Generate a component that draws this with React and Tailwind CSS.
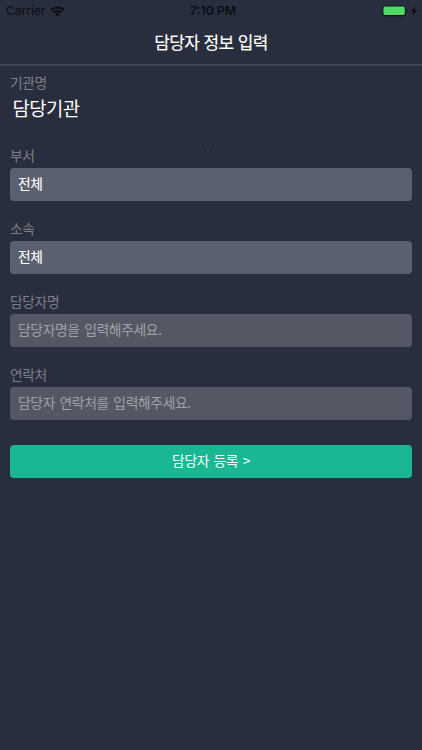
import { useState } from 'react';

function StatusBar() {
  return (
    <div className="flex h-[22px] items-center pr-1 pl-1.5 font-['Inter','Liberation_Sans',sans-serif] leading-none text-[#0b0d13]">
      <div className="flex flex-1 items-center gap-[5px]">
        <span className="text-[12px]">Carrier</span>
        <svg width="15" height="11" viewBox="0 0 14 11" fill="none" stroke="currentColor" strokeWidth="2.1">
          <path d="M.7 4.1a9 9 0 0 1 12.6 0" />
          <path d="M3 6.6a5.7 5.7 0 0 1 8 0" />
          <path d="M7 10.6 4.7 8.3a3.2 3.2 0 0 1 4.6 0z" fill="currentColor" stroke="none" />
        </svg>
      </div>
      <span className="pl-[2px] text-[12.3px] font-semibold">7:10 PM</span>
      <div className="flex flex-1 items-center justify-end">
        <svg width="36" height="12" viewBox="0 0 36 12">
          <rect x=".8" y="1" width="22.6" height="9.6" rx="2" fill="#4cd964" stroke="#10131a" strokeWidth="1.2" />
          <path d="M25 4v3.6c1.3-.4 1.3-3.2 0-3.6z" fill="#1a1e2c" />
          <path d="M33.2.8 29.2 6.4h2.5l-1.3 4.4 4.5-5.9h-2.6z" fill="#0b0d13" />
        </svg>
      </div>
    </div>
  );
}

function Field({ label, children }) {
  return (
    <label className="block h-[73px]">
      <span className="block h-[22.5px] text-[13.8px] leading-[20px] tracking-[-0.4px] text-[#7e7f86]">{label}</span>
      {children}
    </label>
  );
}

function Select({ value }) {
  return (
    <div className="flex h-[33.5px] items-center rounded-[4px] bg-[#5b6070] px-2 pb-[2px] text-[13.8px] tracking-[-0.4px] [-webkit-text-stroke:0.12px]">
      {value}
    </div>
  );
}

function TextInput(props) {
  return (
    <input
      className="block h-[33.5px] w-full rounded-[4px] bg-[#555864] px-2 pb-[2px] text-[13.8px] tracking-[-0.35px] [word-spacing:1.7px] outline-none placeholder:text-[#a0a1a7]"
      {...props}
    />
  );
}

export default function App() {
  const [name, setName] = useState('');
  const [phone, setPhone] = useState('');

  return (
    <div className="min-h-[750px] bg-[#292e3e] font-['Noto_Sans_CJK_KR',sans-serif] text-white">
      <header className="h-[66px] border-b-2 border-[#414556]">
        <StatusBar />
        <h1 className="text-center text-[17px] leading-[40px] tracking-[-0.65px] [word-spacing:1.2px] [-webkit-text-stroke:0.15px]">
          담당자 정보 입력
        </h1>
      </header>

      <main className="px-[10px] pt-[6px]">
        <Field label="기관명">
          <span className="block pl-[2.5px] text-[18.8px] leading-[25px] tracking-[-0.5px]">담당기관</span>
        </Field>
        <div className="relative">
          <span className="absolute top-[6px] left-[197px] h-px w-[2px] bg-[#4b5060]" />
          <Field label="부서">
            <Select value="전체" />
          </Field>
        </div>
        <Field label="소속">
          <Select value="전체" />
        </Field>
        <Field label="담당자명">
          <TextInput placeholder="담당자명을 입력해주세요." value={name} onChange={(e) => setName(e.target.value)} />
        </Field>
        <Field label="연락처">
          <TextInput
            type="tel"
            placeholder="담당자 연락처를 입력해주세요."
            value={phone}
            onChange={(e) => setPhone(e.target.value)}
          />
        </Field>
        <button
          type="button"
          className="mt-[7.5px] block h-[33.5px] w-full rounded-[4px] bg-[#1ab793] pb-[2px] text-[13.8px] tracking-[-0.35px] [word-spacing:1.7px]"
        >
          담당자 등록 &gt;
        </button>
      </main>
    </div>
  );
}
